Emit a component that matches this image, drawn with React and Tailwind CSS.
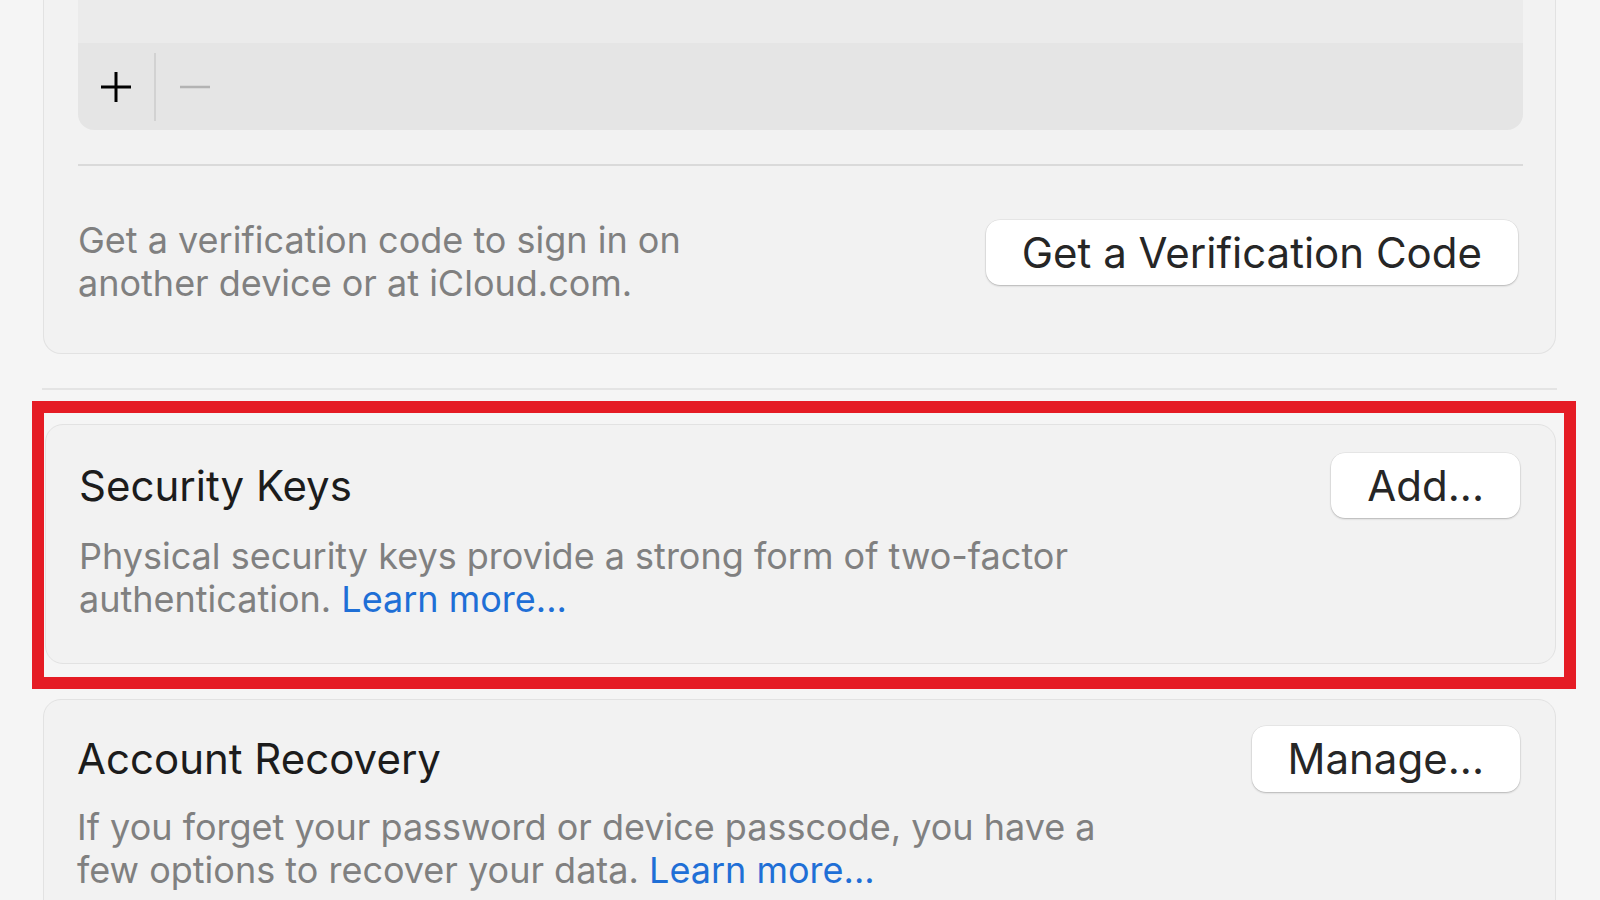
import React from "react";

const Button = ({ children, className = "" }) => (
  <button
    className={`h-[65px] shrink-0 rounded-[14px] bg-white px-[36px] text-[42px] leading-none text-[#262626] shadow-[0_1px_2px_rgba(0,0,0,0.22),0_0_0_0.5px_rgba(0,0,0,0.08)] ${className}`}
  >
    {children}
  </button>
);

const Link = ({ children }) => <a className="text-[#1f6fd6]">{children}</a>;

const SettingCard = ({ title, action, top = "pt-[28px]", gap = "mt-[17px]", children }) => (
  <div className={`rounded-[18px] border border-[#e2e2e2] bg-[#f2f2f2] pb-[42px] pl-[33px] pr-[35px] ${top}`}>
    <div className="flex items-center justify-between">
      <h2 className="text-[42px] font-normal leading-[48px] text-[#1c1c1c]">{title}</h2>
      {action}
    </div>
    <p className={`text-[36px] leading-[43px] text-[#808080] ${gap}`}>{children}</p>
  </div>
);

export default function App() {
  return (
    <div
      className="h-[900px] overflow-hidden bg-[#f5f5f5]"
      style={{ fontFamily: "Inter, 'Liberation Sans', sans-serif" }}
    >
      <div className="ml-[43px] w-[1513px]">
        {/* verification card, top cut off by the screenshot */}
        <div className="rounded-b-[18px] border border-t-0 border-[#e2e2e2] bg-[#f2f2f2] pb-[48px]">
          <div className="ml-[34px] mr-[32px] overflow-hidden rounded-b-[16px]">
            <div className="h-[43px] bg-[#ebebeb]" />
            <div className="flex h-[87px] items-center bg-[#e5e5e5]">
              <button className="flex w-[76px] items-center justify-center text-black">
                <svg width="34" height="34" viewBox="0 0 34 34">
                  <path d="M17 2v30M2 17h30" stroke="currentColor" strokeWidth="3" />
                </svg>
              </button>
              <div className="h-[68px] w-[2px] bg-[#d2d2d2]" />
              <button className="flex w-[78px] items-center justify-center text-[#b3b3b3]">
                <svg width="34" height="34" viewBox="0 0 34 34">
                  <path d="M2 17h30" stroke="currentColor" strokeWidth="2.5" />
                </svg>
              </button>
            </div>
          </div>
          <div className="ml-[34px] mr-[32px] mt-[34px] h-[2px] bg-[#dadada]" />
          <div className="mt-[53px] flex items-start justify-between pl-[34px] pr-[37px]">
            <p className="text-[36px] leading-[43px] text-[#808080]">
              Get a verification code to sign in on
              <br />
              another device or at iCloud.com.
            </p>
            <Button className="mt-[1px]">Get a Verification Code</Button>
          </div>
        </div>

        <div className="-ml-[1px] mt-[34px] h-[2px] w-[1515px] bg-[#e4e4e4]" />

        {/* highlighted section */}
        <div className="-ml-[11px] mt-[11px] w-[1544px] border-[12px] border-[#e51b24] pb-[13px] pl-[1px] pr-[8px] pt-[11px]">
          <SettingCard title="Security Keys" action={<Button className="h-[64px]">Add...</Button>}>
            Physical security keys provide a strong form of two-factor
            <br />
            authentication. <Link>Learn more...</Link>
          </SettingCard>
        </div>

        <div className="mt-[10px]">
          <SettingCard
            title="Account Recovery"
            top="pt-[26px]"
            gap="mt-[14px]"
            action={<Button className="h-[66px]">Manage...</Button>}
          >
            If you forget your password or device passcode, you have a
            <br />
            few options to recover your data. <Link>Learn more...</Link>
          </SettingCard>
        </div>
      </div>
    </div>
  );
}
